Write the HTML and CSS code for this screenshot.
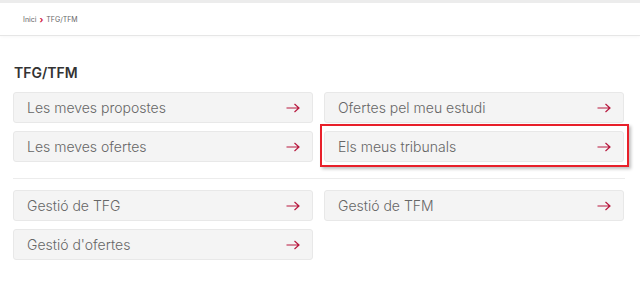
FILE: index.html
```html
<!DOCTYPE html>
<html lang="ca">
<head>
    <meta charset="UTF-8">
    <meta name="viewport" content="width=device-width, initial-scale=1.0">
    <title>TFG/TFM</title>
    <link rel="stylesheet" href="styles.css">
</head>
<body>
    <header class="topbar">
        <nav class="breadcrumb">
            <a href="#">Inici</a>
            <span class="sep">&rsaquo;</span>
            <span>TFG/TFM</span>
        </nav>
    </header>

    <main class="content">
        <h2 class="title">TFG/TFM</h2>

        <div class="links">
            <a class="link" href="#">Les meves propostes <svg class="arrow" viewBox="0 0 14 10"><path d="M0.5 5H13M8.5 1L13 5L8.5 9"/></svg></a>
            <a class="link" href="#">Ofertes pel meu estudi <svg class="arrow" viewBox="0 0 14 10"><path d="M0.5 5H13M8.5 1L13 5L8.5 9"/></svg></a>
            <a class="link" href="#">Les meves ofertes <svg class="arrow" viewBox="0 0 14 10"><path d="M0.5 5H13M8.5 1L13 5L8.5 9"/></svg></a>
            <a class="link highlighted" href="#">Els meus tribunals <svg class="arrow" viewBox="0 0 14 10"><path d="M0.5 5H13M8.5 1L13 5L8.5 9"/></svg></a>
        </div>

        <hr class="divider">

        <div class="links">
            <a class="link" href="#">Gestió de TFG <svg class="arrow" viewBox="0 0 14 10"><path d="M0.5 5H13M8.5 1L13 5L8.5 9"/></svg></a>
            <a class="link" href="#">Gestió de TFM <svg class="arrow" viewBox="0 0 14 10"><path d="M0.5 5H13M8.5 1L13 5L8.5 9"/></svg></a>
            <a class="link" href="#">Gestió d'ofertes <svg class="arrow" viewBox="0 0 14 10"><path d="M0.5 5H13M8.5 1L13 5L8.5 9"/></svg></a>
        </div>
    </main>
</body>
</html>
```

FILE: styles.css
```css
body {
    font-family: Inter, "Open Sans", sans-serif;
    margin: 0;
    background-color: #ffffff;
    color: #333;
}
.topbar {
    border-top: 3px solid #ececec;
    border-bottom: 1px solid #e6e6e6;
    height: 32px;
    display: flex;
    align-items: center;
    box-shadow: 0 1px 3px rgba(0, 0, 0, 0.03);
}
.breadcrumb {
    margin-left: 23px;
    font-size: 7px;
    color: #666;
    display: flex;
    gap: 3px;
    align-items: center;
}
.breadcrumb a {
    color: #666;
    text-decoration: none;
}
.breadcrumb .sep {
    color: #d0103a;
    font-size: 9px;
    font-weight: 700;
}
.content {
    width: 612px;
    margin-left: 13px;
    padding-top: 27px;
}
.title {
    font-size: 14px;
    font-weight: 600;
    line-height: 20px;
    margin: 0 0 9px 1px;
    color: #333;
}
.links {
    display: grid;
    grid-template-columns: 300px 300px;
    column-gap: 11px;
    row-gap: 8px;
}
.link {
    position: relative;
    box-sizing: border-box;
    height: 31px;
    display: flex;
    align-items: center;
    justify-content: space-between;
    padding: 0 12px 0 13px;
    background-color: #f4f4f4;
    border: 1px solid #e8e8e8;
    border-radius: 3px;
    color: #666;
    font-size: 14px;
    font-weight: 300;
    text-decoration: none;
}
.arrow {
    width: 14px;
    height: 10px;
    fill: none;
    stroke: #b8193f;
    stroke-width: 1.2;
}
.highlighted::after {
    content: "";
    position: absolute;
    left: -5px;
    top: -8px;
    right: -6px;
    bottom: -6px;
    border: 2px solid #e8202a;
    box-shadow: 2px 2px 3px rgba(0, 0, 0, 0.25);
}
.divider {
    border: none;
    border-top: 1px solid #ececec;
    margin: 16px 0 11px 0;
}
```
